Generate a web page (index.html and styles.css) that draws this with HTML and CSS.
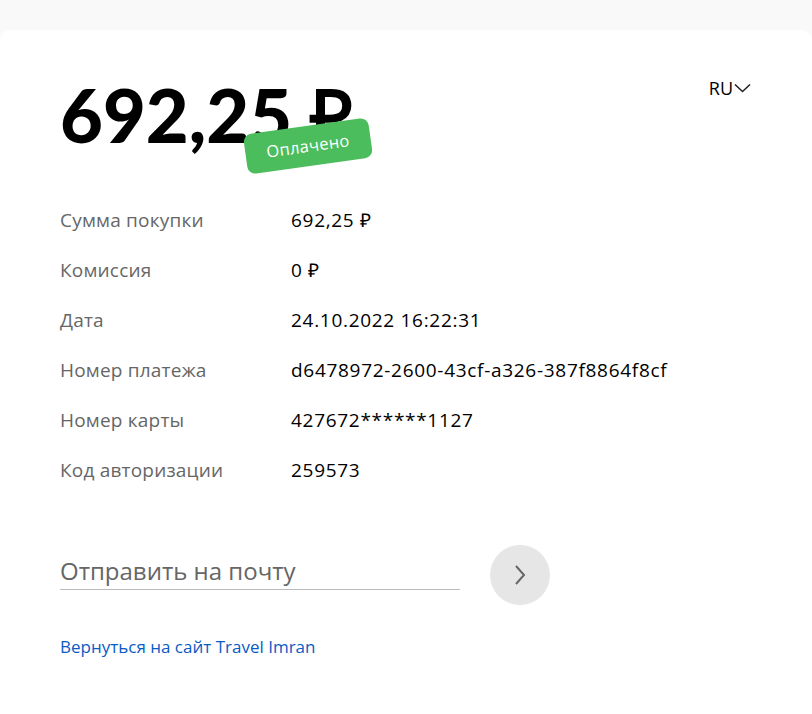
FILE: index.html
```html
<!DOCTYPE html>
<html lang="ru">
<head>
<meta charset="utf-8">
<link rel="stylesheet" href="styles.css">
</head>
<body>
<div class="page">
  <div class="card">
    <div class="head">
      <div class="amount-wrap">
        <div class="amount">692,25 ₽</div>
        <div class="badge">Оплачено</div>
      </div>
      <div class="lang">RU<svg width="19" height="12" viewBox="0 0 19 12"><path d="M2 2.5 L9.5 9.5 L17 2.5" fill="none" stroke="#222" stroke-width="1.6"/></svg></div>
    </div>
    <div class="details">
      <div class="row"><div class="label">Сумма покупки</div><div class="value">692,25 ₽</div></div>
      <div class="row"><div class="label">Комиссия</div><div class="value">0 ₽</div></div>
      <div class="row"><div class="label">Дата</div><div class="value">24.10.2022 16:22:31</div></div>
      <div class="row"><div class="label">Номер платежа</div><div class="value">d6478972-2600-43cf-a326-387f8864f8cf</div></div>
      <div class="row"><div class="label">Номер карты</div><div class="value">427672******1127</div></div>
      <div class="row"><div class="label">Код авторизации</div><div class="value">259573</div></div>
    </div>
    <div class="mail">
      <div class="field">Отправить на почту</div>
      <div class="send"><svg width="16" height="24" viewBox="0 0 16 24"><path d="M4 3 L12 12 L4 21" fill="none" stroke="#666" stroke-width="2"/></svg></div>
    </div>
    <a class="back" href="#">Вернуться на сайт Travel Imran</a>
  </div>
</div>
</body>
</html>
```
FILE: styles.css
```css
html, body { margin: 0; padding: 0; }
body { background: #f9f9f9; font-family: "Open Sans", "Liberation Sans", sans-serif; color: #000; }
.page { padding-top: 30px; }
.card { background: #fff; border-radius: 10px 10px 0 0; height: 684px; box-sizing: border-box; padding: 40px 60px 0 60px; }
.head { display: flex; justify-content: space-between; align-items: flex-start; height: 125px; }
.amount-wrap { position: relative; }
.amount { font-family: "Lato", sans-serif; font-weight: 900; font-size: 74px; line-height: 90px; }
.badge { position: absolute; left: 185px; top: 56px; background: #4cbd5c; color: #fff; font-size: 16.5px; letter-spacing: 0.3px; padding: 0 21px; height: 40px; line-height: 40px; border-radius: 8px; transform: rotate(-8deg); }
.lang { display: flex; align-items: center; font-size: 18px; margin-top: 6px; padding-right: 0; }
.details { display: flex; flex-direction: column; }
.row { display: flex; height: 50px; align-items: center; font-size: 19px; }
.label { width: 231px; color: #666; letter-spacing: 0.2px; }
.value { color: #000; letter-spacing: 0.7px; }
.mail { display: flex; align-items: center; margin-top: 44px; }
.field { width: 400px; border-bottom: 1px solid #bbb; font-size: 24px; color: #666; padding-bottom: 2px; }
.send { width: 60px; height: 60px; border-radius: 50%; background: #e6e6e6; display: flex; align-items: center; justify-content: center; margin-left: 30px; margin-top: 6px; }
.back { display: inline-block; margin-top: 30px; color: #0a5bc4; font-size: 17px; text-decoration: none; }
```
